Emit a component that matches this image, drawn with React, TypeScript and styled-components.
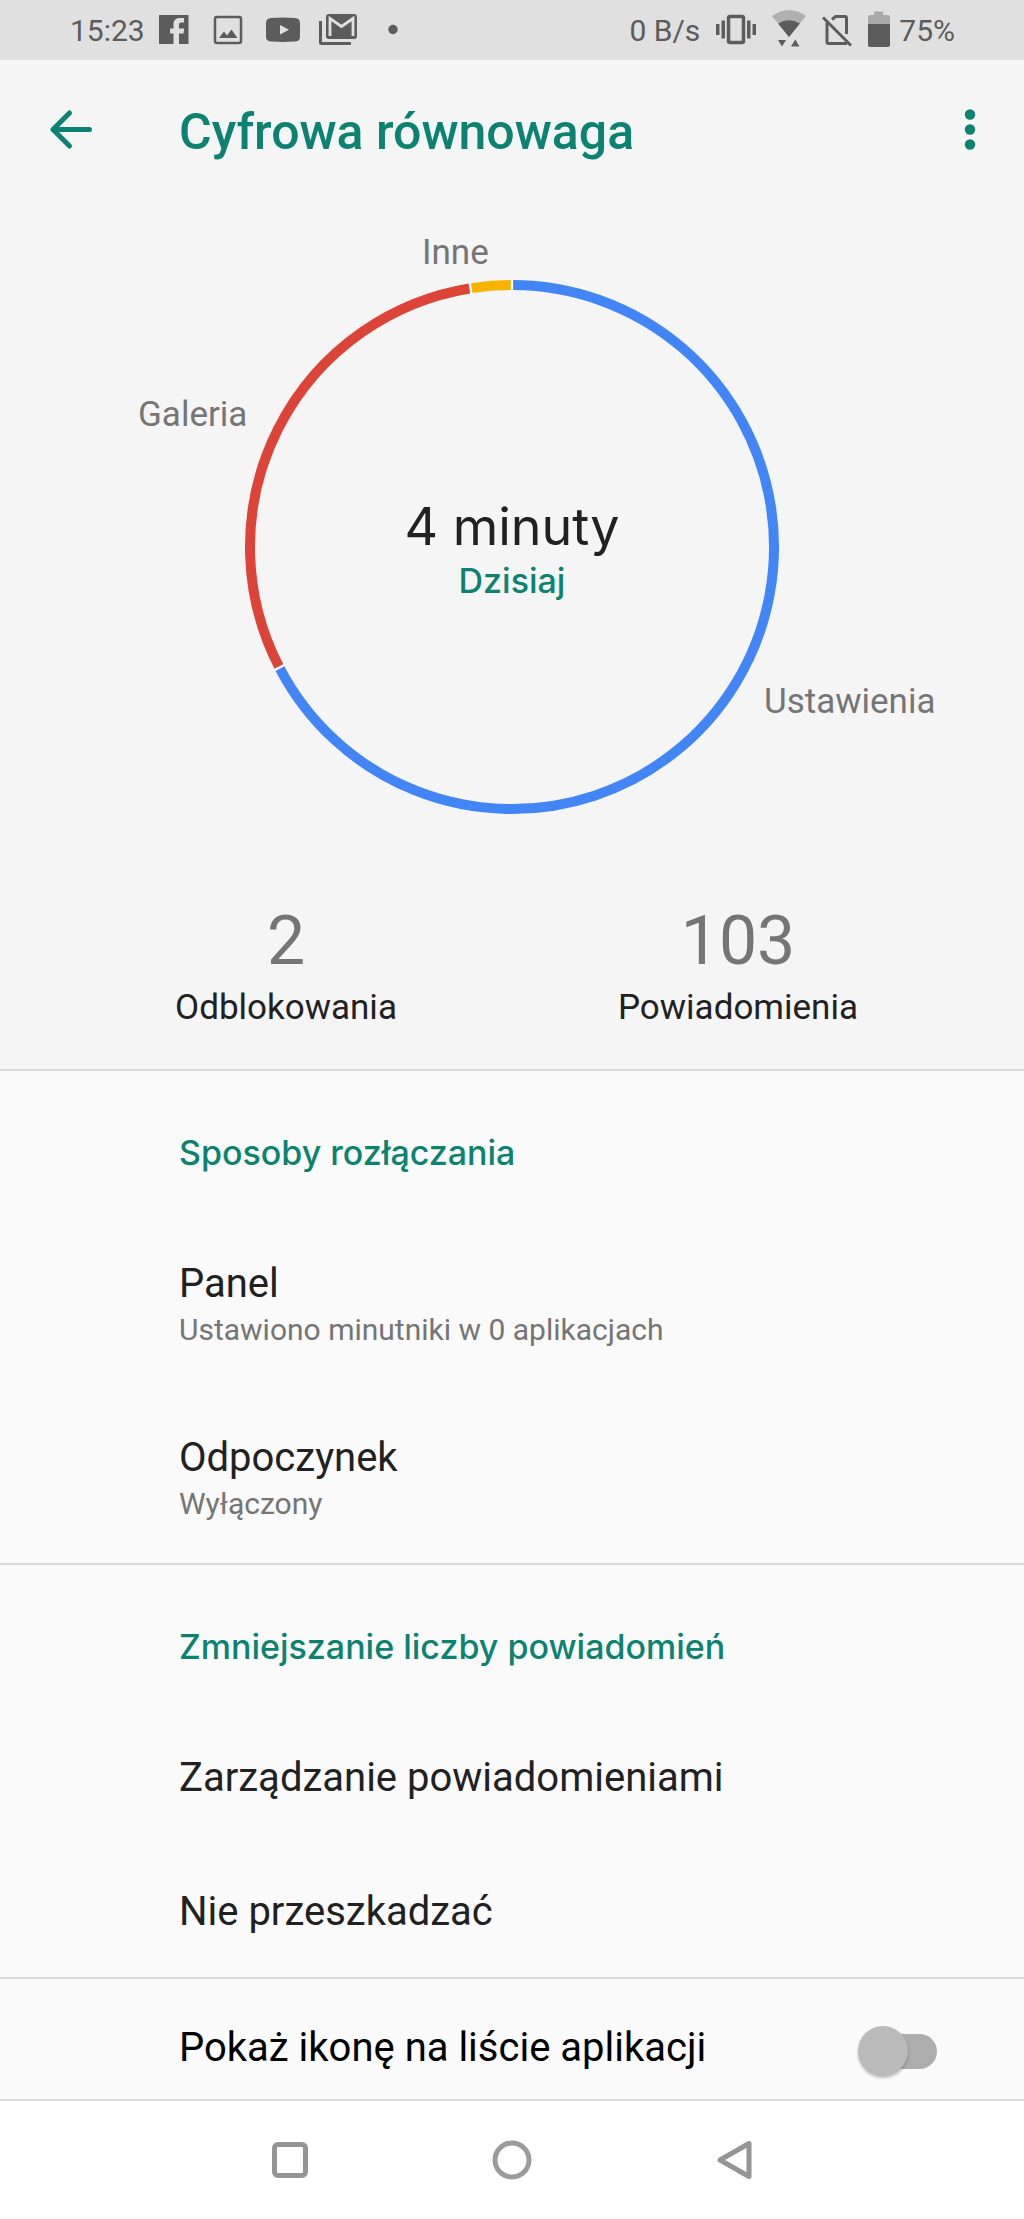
import React from "react";
import styled, { createGlobalStyle } from "styled-components";

const teal = "#0c8270";
const ink = "#212121";
const muted = "#757575";
const line = "#dadada";
const statusInk = "#5c5c5c";
const roboto = `Roboto, "Noto Sans", sans-serif`;
const display = `Inter, Roboto, sans-serif`;

const GlobalStyle = createGlobalStyle`
  *, *::before, *::after { box-sizing: border-box; }
  body { margin: 0; background: #ffffff; font-family: ${roboto}; color: ${ink}; }
  h1, h2, p, dl, dd, dt, ul, figure { margin: 0; padding: 0; }
  button { border: 0; padding: 0; background: none; font: inherit; color: inherit; cursor: pointer; }
  svg { display: block; flex: none; }
`;

const Screen = styled.div`
  display: flex;
  flex-direction: column;
  min-height: 100vh;
  background: #fafafa;
`;

const StatusBar = styled.div`
  display: flex;
  justify-content: space-between;
  height: 60px;
  padding: 0 69px 0 70px;
  background: #e0e0e0;
  color: ${statusInk};
  font-size: 30px;
  line-height: 62px;
`;

const StatusGroup = styled.div<{ $gap: number }>`
  display: flex;
  gap: ${(p) => p.$gap}px;
  white-space: nowrap;
`;

const TopBar = styled.header`
  display: flex;
  align-items: center;
  height: 140px;
  padding: 0 30px 0 47px;
`;

const IconButton = styled.button`
  display: flex;
  align-items: center;
  justify-content: center;
  width: 48px;
  height: 48px;
  color: ${teal};
`;

const Title = styled.h1`
  flex: 1;
  padding: 4px 0 0 84px;
  color: ${teal};
  font-size: 50px;
  line-height: 60px;
  font-weight: 500;
`;

const Summary = styled.section`
  padding: 0 60px 41px;
  border-bottom: 2px solid ${line};
`;

const Usage = styled.div`
  background: #f5f5f5;
`;

const Donut = styled.figure`
  position: relative;
  width: 536px;
  margin: 79px auto 86px;
`;

const DonutCenter = styled.figcaption`
  position: absolute;
  inset: 0;
  display: flex;
  flex-direction: column;
  align-items: center;
  justify-content: center;
  padding-top: 8px;
`;

const Total = styled.p`
  font-family: ${display};
  font-size: 52px;
  line-height: 60px;
`;

const Period = styled.p`
  color: ${teal};
  font-family: ${display};
  font-size: 34px;
  line-height: 48px;
  font-weight: 500;
`;

const SliceLabel = styled.span<{ $x: number; $y: number }>`
  position: absolute;
  left: ${(p) => p.$x}px;
  top: ${(p) => p.$y}px;
  color: ${muted};
  font-size: 35px;
  line-height: 40px;
`;

const Stats = styled.dl`
  display: grid;
  grid-template-columns: 1fr 1fr;
`;

const Stat = styled.div`
  display: flex;
  flex-direction: column-reverse;
  align-items: center;
  gap: 7px;
`;

const StatLabel = styled.dt`
  font-size: 35px;
  line-height: 40px;
`;

const StatValue = styled.dd`
  color: ${muted};
  font-size: 68px;
  line-height: 80px;
`;

const Section = styled.section`
  border-bottom: 2px solid ${line};
`;

const SectionTitle = styled.h2`
  padding: 58px 40px 38px 179px;
  color: ${teal};
  font-family: ${display};
  font-size: 34px;
  line-height: 48px;
  font-weight: 500;
`;

const Row = styled.button`
  display: block;
  width: 100%;
  padding: 43px 40px 39px 179px;
  text-align: left;
`;

const RowTitle = styled.span`
  display: block;
  font-size: 40px;
  line-height: 52px;
`;

const RowHint = styled.span`
  display: block;
  color: ${muted};
  font-size: 30px;
  line-height: 40px;
`;

const SwitchRow = styled.label`
  display: flex;
  justify-content: space-between;
  padding: 43px 87px 17px 179px;
  border-bottom: 2px solid ${line};
  color: #000000;
  cursor: pointer;
`;

const Switch = styled.input`
  appearance: none;
  position: relative;
  width: 79px;
  height: 60px;
  margin: 0;
  cursor: pointer;

  &::before {
    content: "";
    position: absolute;
    inset: 12px 0 13px 8px;
    border-radius: 18px;
    background: #adadad;
  }

  &::after {
    content: "";
    position: absolute;
    left: 0;
    top: 4px;
    width: 50px;
    height: 50px;
    border-radius: 50%;
    background: #bababa;
    box-shadow: 0 2px 3px rgba(0, 0, 0, 0.25);
  }

  &:checked::before { background: #86c0b7; }
  &:checked::after { left: 29px; background: ${teal}; }
`;

const NavBar = styled.nav`
  flex: 1;
  display: grid;
  grid-template-columns: repeat(3, 1fr);
  min-height: 117px;
  padding: 0 17.5%;
  background: #ffffff;
`;

const NavButton = styled.button`
  display: flex;
  align-items: center;
  justify-content: center;
`;

const slices = [
  { name: "Ustawienia", color: "#4285f4", from: 0, to: 242.6, x: 520, y: 403 },
  { name: "Galeria", color: "#db4437", from: 242.6, to: 350.9, x: -106, y: 116 },
  { name: "Inne", color: "#f4b400", from: 350.9, to: 360, x: 178, y: -46 },
];

const center = 268;
const radius = 262;

function point(angle: number) {
  const rad = (angle * Math.PI) / 180;
  return `${center + radius * Math.sin(rad)} ${center - radius * Math.cos(rad)}`;
}

function arc(from: number, to: number) {
  const gap = 0.25;
  const large = to - from > 180 ? 1 : 0;
  return `M${point(from + gap)}A${radius} ${radius} 0 ${large} 1 ${point(to - gap)}`;
}

function LeftStatusIcons() {
  return (
    <svg width="275" height="60" viewBox="0 0 275 60" fill={statusInk} aria-hidden="true">
      <path d="M13 15h29.500v29h-9.500v-10.500h4.500l.7-5H33v-3.500c0-2 .8-2.500 2.500-2.500h2.500v-4.500h-4c-4.500 0-6.500 2.500-6.500 6.500v4h-3.500v5h3.500V44H13z" />
      <rect x="69" y="17" width="26" height="26" rx="2" fill="none" stroke={statusInk} strokeWidth="2.500" />
      <path d="M73 38l5-6.500 3 4 4.500-6 6 8.500z" />
      <path fillRule="evenodd" d="M125 18q12-1 24 0q5 .4 5 5v14q0 4-5 4.500q-12 .8-24 0q-5-.5-5-4.500V23q0-4.600 5-5zM134 25v9.500l9-4.700z" />
      <path d="M174.500 21v21.500q0 1 1 1H205" fill="none" stroke={statusInk} strokeWidth="3" />
      <rect x="180" y="14" width="31" height="25" rx="3" />
      <path d="M184 36V18.500L195.500 26.500L207 18.500V36" fill="none" stroke="#e0e0e0" strokeWidth="2.800" />
      <circle cx="247" cy="29.500" r="4.700" />
    </svg>
  );
}

function VibrateIcon() {
  return (
    <svg width="40" height="60" viewBox="0 0 40 60" fill={statusInk} aria-hidden="true">
      <rect x="12.500" y="16.500" width="15" height="26" rx="1.500" fill="none" stroke={statusInk} strokeWidth="3.500" />
      <path d="M0 24h3.500v11H0zM5.500 20.500H9v18H5.500zM31 20.500h3.500v18H31zM36.500 24H40v11h-3.500z" />
    </svg>
  );
}

function WifiIcon() {
  return (
    <svg width="34" height="60" viewBox="0 0 34 60" fill={statusInk} aria-hidden="true">
      <path d="M0 16Q17 4 34 16L17 37z" fill="#b0b0b0" />
      <path d="M6 23.500Q17 17 28 23.500L17 37z" />
      <path d="M6 40h8l-4 6.500zM19 46.500h8.500L23.300 39.500z" />
    </svg>
  );
}

function NoSimIcon() {
  return (
    <svg width="30" height="60" viewBox="0 0 30 60" fill="none" stroke={statusInk} aria-hidden="true">
      <path d="M10 19.500L13.500 16.500H23q1.500 0 1.500 1.500V34" strokeWidth="3" />
      <path d="M5 23V42q0 1.500 1.500 1.500H25" strokeWidth="3" />
      <path d="M1 17.500L29 45.500" strokeWidth="3" />
    </svg>
  );
}

function BatteryIcon() {
  return (
    <svg width="22" height="60" viewBox="0 0 22 60" aria-hidden="true">
      <path d="M0 24V17q0-2 2-2h4V11.500h9V15h5q2 0 2 2v7z" fill="#aaaaaa" />
      <path d="M0 24h22v21q0 2-2 2H2q-2 0-2-2z" fill={statusInk} />
    </svg>
  );
}

export default function App() {
  return (
    <Screen>
      <GlobalStyle />
      <Usage>
        <StatusBar>
          <StatusGroup $gap={1}>
            <span>15:23</span>
            <LeftStatusIcons />
          </StatusGroup>
          <StatusGroup $gap={16}>
            <span>0 B/s</span>
            <VibrateIcon />
            <WifiIcon />
            <NoSimIcon />
            <StatusGroup $gap={9}>
              <BatteryIcon />
              <span>75%</span>
            </StatusGroup>
          </StatusGroup>
        </StatusBar>

        <TopBar>
          <IconButton type="button" aria-label="Wstecz">
            <svg width="48" height="48" viewBox="0 0 48 48" fill="none" stroke="currentColor" strokeWidth="5" strokeLinecap="round" strokeLinejoin="round">
              <path d="M42.500 23.500H6M22.500 7L6 23.500L22.500 40" />
            </svg>
          </IconButton>
          <Title>Cyfrowa równowaga</Title>
          <IconButton type="button" aria-label="Więcej opcji">
            <svg width="48" height="48" viewBox="0 0 48 48" fill="currentColor">
              <circle cx="24" cy="8.500" r="5.200" />
              <circle cx="24" cy="23.500" r="5.200" />
              <circle cx="24" cy="38.500" r="5.200" />
            </svg>
          </IconButton>
        </TopBar>

        <Summary>
          <Donut>
            <svg width="536" height="536" viewBox="0 0 536 536" fill="none" strokeWidth="10" aria-hidden="true">
              <circle cx={center} cy={center} r={radius} stroke="#ffffff" />
              {slices.map((s) => (
                <path key={s.name} d={arc(s.from, s.to)} stroke={s.color} />
              ))}
            </svg>
            {slices.map((s) => (
              <SliceLabel key={s.name} $x={s.x} $y={s.y}>
                {s.name}
              </SliceLabel>
            ))}
            <DonutCenter>
              <Total>4 minuty</Total>
              <Period>Dzisiaj</Period>
            </DonutCenter>
          </Donut>
          <Stats>
            <Stat>
              <StatLabel>Odblokowania</StatLabel>
              <StatValue>2</StatValue>
            </Stat>
            <Stat>
              <StatLabel>Powiadomienia</StatLabel>
              <StatValue>103</StatValue>
            </Stat>
          </Stats>
        </Summary>
      </Usage>

      <Section>
        <SectionTitle>Sposoby rozłączania</SectionTitle>
        <Row type="button">
          <RowTitle>Panel</RowTitle>
          <RowHint>Ustawiono minutniki w 0 aplikacjach</RowHint>
        </Row>
        <Row type="button">
          <RowTitle>Odpoczynek</RowTitle>
          <RowHint>Wyłączony</RowHint>
        </Row>
      </Section>

      <Section>
        <SectionTitle>Zmniejszanie liczby powiadomień</SectionTitle>
        <Row type="button">
          <RowTitle>Zarządzanie powiadomieniami</RowTitle>
        </Row>
        <Row type="button">
          <RowTitle>Nie przeszkadzać</RowTitle>
        </Row>
      </Section>

      <SwitchRow>
        <RowTitle>Pokaż ikonę na liście aplikacji</RowTitle>
        <Switch type="checkbox" role="switch" />
      </SwitchRow>

      <NavBar aria-label="Nawigacja systemowa">
        <NavButton type="button" aria-label="Ostatnie">
          <svg width="40" height="40" viewBox="0 0 40 40" fill="none" stroke="#959595" strokeWidth="5">
            <rect x="4.500" y="4.500" width="31" height="31" rx="3.500" />
          </svg>
        </NavButton>
        <NavButton type="button" aria-label="Ekran główny">
          <svg width="40" height="40" viewBox="0 0 40 40" fill="none" stroke="#9b9b9b" strokeWidth="5">
            <circle cx="20" cy="20" r="17" />
          </svg>
        </NavButton>
        <NavButton type="button" aria-label="Wróć">
          <svg width="40" height="40" viewBox="0 0 40 40" fill="none" stroke="#959595" strokeWidth="5" strokeLinejoin="round">
            <path d="M35 3.500V36.500L6 20z" />
          </svg>
        </NavButton>
      </NavBar>
    </Screen>
  );
}
